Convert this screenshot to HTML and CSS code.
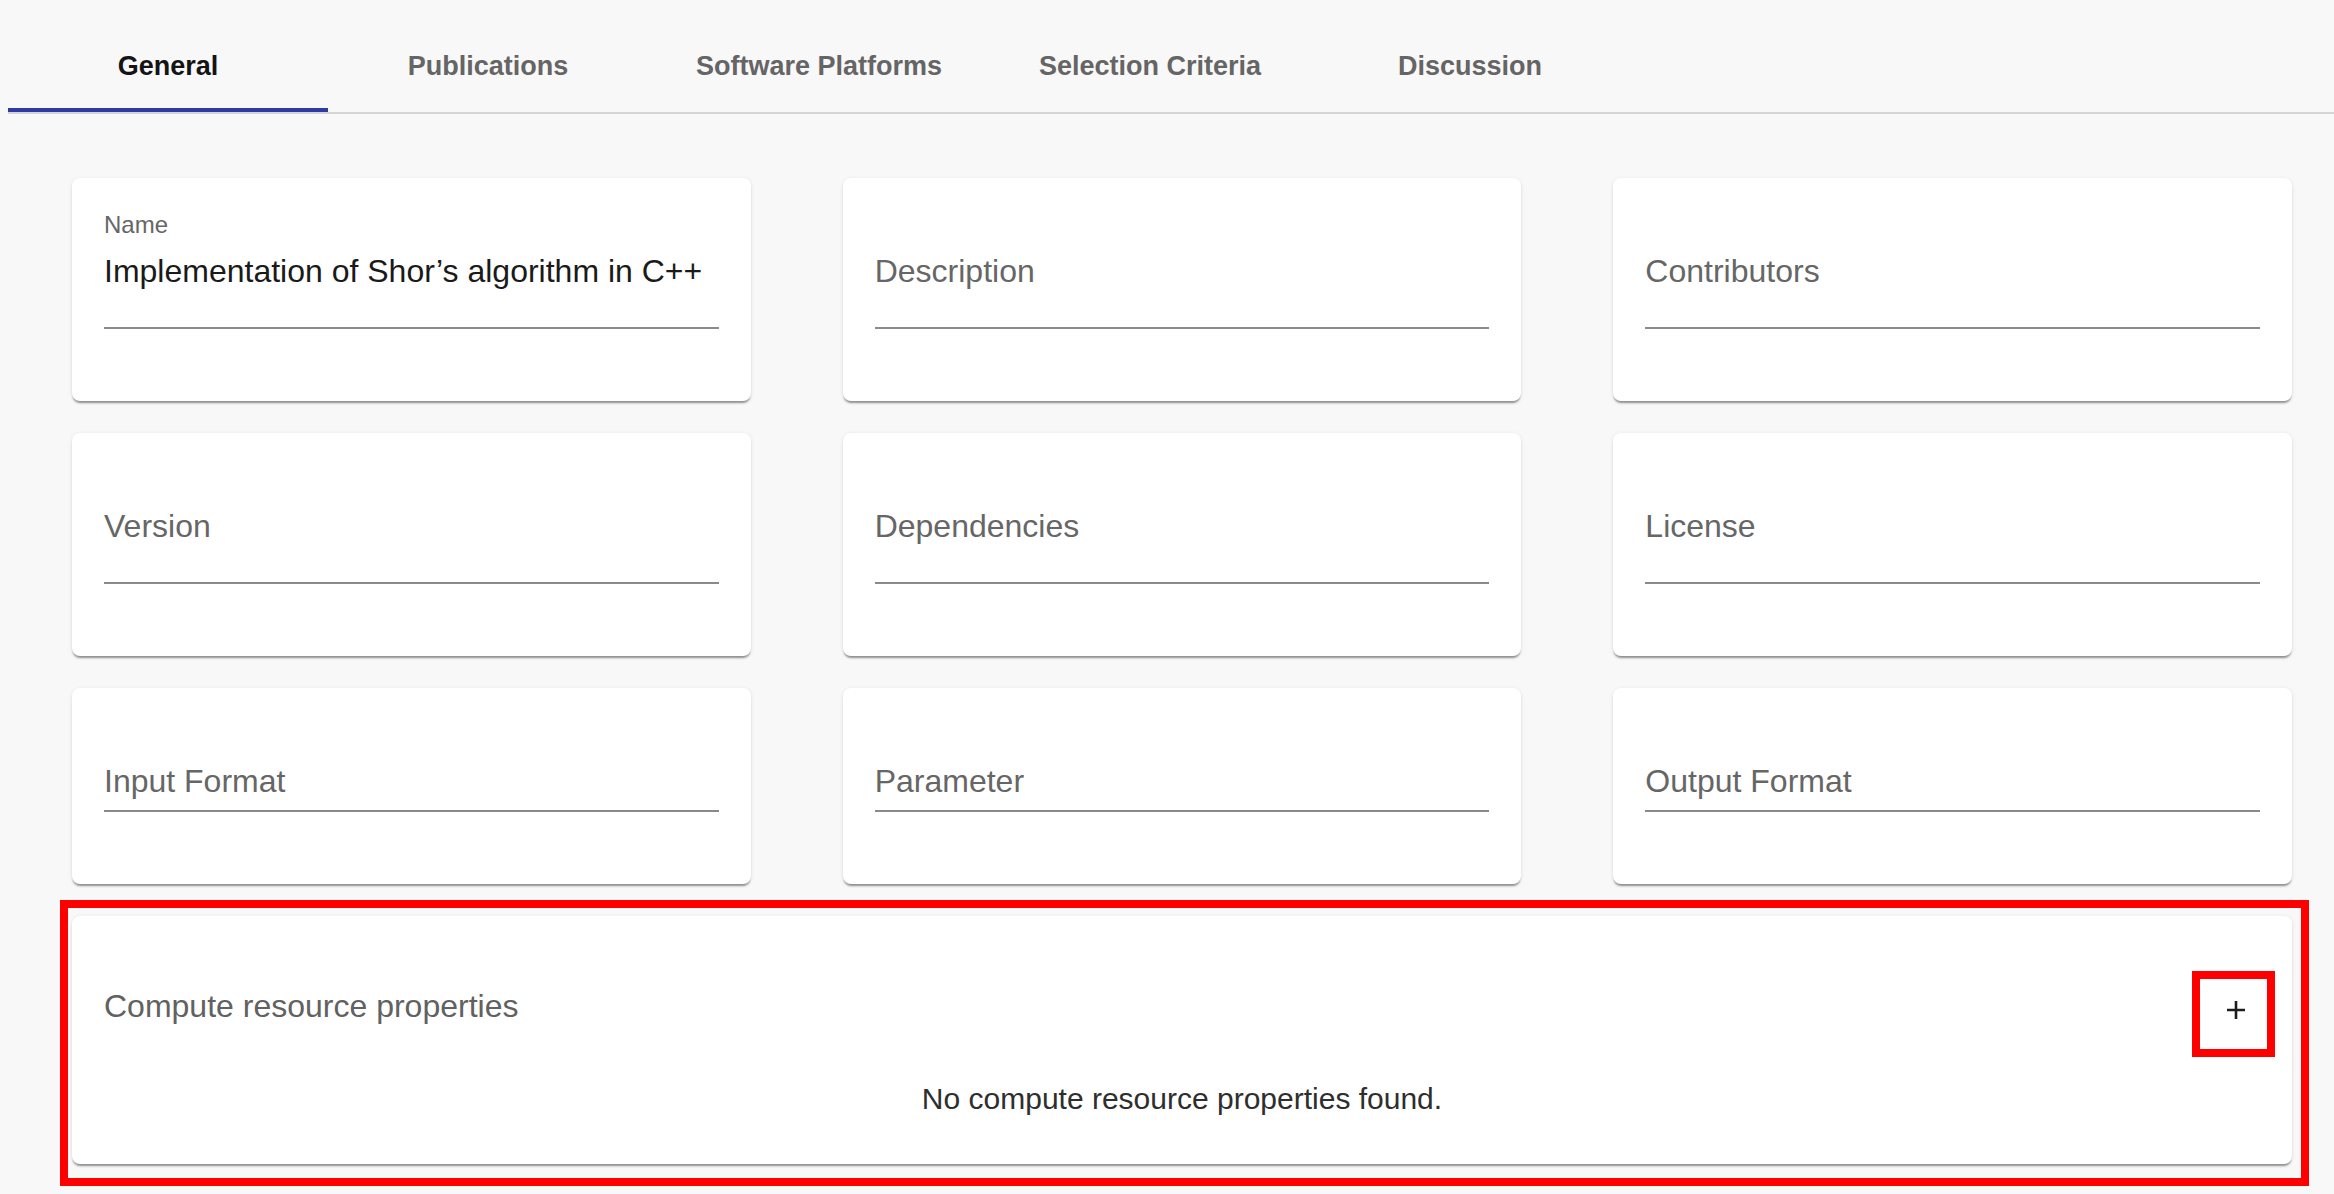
FILE: index.html
```html
<!DOCTYPE html>
<html lang="en">
<head>
<meta charset="utf-8">
<title>Implementation of Shor’s algorithm in C++</title>
<link rel="stylesheet" href="styles.css">
</head>
<body>
<nav class="tabs">
  <div class="tab active">General</div>
  <div class="tab">Publications</div>
  <div class="tab">Software Platforms</div>
  <div class="tab">Selection Criteria</div>
  <div class="tab">Discussion</div>
</nav>
<main class="content">
  <div class="grid">
    <div class="card field-card">
      <div class="label">Name</div>
      <div class="input multi">Implementation of Shor’s algorithm in C++</div>
    </div>
    <div class="card field-card">
      <div class="label"></div>
      <div class="input multi placeholder">Description</div>
    </div>
    <div class="card field-card">
      <div class="label"></div>
      <div class="input multi placeholder">Contributors</div>
    </div>
    <div class="card field-card">
      <div class="label"></div>
      <div class="input multi placeholder">Version</div>
    </div>
    <div class="card field-card">
      <div class="label"></div>
      <div class="input multi placeholder">Dependencies</div>
    </div>
    <div class="card field-card">
      <div class="label"></div>
      <div class="input multi placeholder">License</div>
    </div>
    <div class="card field-card">
      <div class="label"></div>
      <div class="input single placeholder">Input Format</div>
    </div>
    <div class="card field-card">
      <div class="label"></div>
      <div class="input single placeholder">Parameter</div>
    </div>
    <div class="card field-card">
      <div class="label"></div>
      <div class="input single placeholder">Output Format</div>
    </div>
  </div>
  <section class="resource-wrap">
    <div class="card resource-card">
      <div class="resource-head">
        <div class="resource-title">Compute resource properties</div>
        <button class="icon-btn" type="button" aria-label="Add">
          <svg width="20" height="20" viewBox="0 0 20 20"><path d="M10 1v18M1 10h18" stroke="#1c1c1c" stroke-width="2.6" fill="none"/></svg>
        </button>
      </div>
      <div class="empty">No compute resource properties found.</div>
      <div class="annot-inner"></div>
    </div>
  </section>
</main>
</body>
</html>
```

FILE: styles.css
```css
html, body {
  margin: 0;
  padding: 0;
}
body {
  background: #f8f8f8;
  font-family: "Liberation Sans", Arial, sans-serif;
}
.tabs {
  display: flex;
  margin: 16px 0 0 8px;
  border-bottom: 2px solid #d5d5d5;
}
.tab {
  position: relative;
  box-sizing: border-box;
  min-width: 320px;
  height: 96px;
  padding: 4px 48px 0;
  display: flex;
  align-items: center;
  justify-content: center;
  font-size: 27px;
  font-weight: bold;
  color: #656565;
  white-space: nowrap;
}
.tab.active {
  color: #141414;
}
.tab.active::after {
  content: "";
  position: absolute;
  left: 0;
  right: 0;
  bottom: 0;
  height: 4px;
  background: #2f3aa3;
}
.content {
  padding: 64px 42px 0 72px;
}
.grid {
  display: grid;
  grid-template-columns: repeat(3, 1fr);
  column-gap: 92px;
  row-gap: 32px;
}
.card {
  background: #fff;
  border-radius: 8px;
  box-shadow: 0 3px 2px -1px rgba(0, 0, 0, 0.38), 0 1px 4px rgba(0, 0, 0, 0.1);
}
.field-card {
  padding: 35px 32px 72px;
}
.label {
  height: 24px;
  line-height: 24px;
  font-size: 24px;
  color: #666;
  margin-bottom: 15px;
}
.input {
  font-size: 32px;
  line-height: 38px;
  color: #1a1a1a;
  border-bottom: 2px solid #8a8a8a;
  white-space: nowrap;
}
.input.multi {
  padding-bottom: 37px;
}
.input.single {
  padding-bottom: 10px;
}
.input.placeholder {
  color: #666;
}
.resource-wrap {
  margin: 16px -17px 0 -12px;
  padding: 8px 9px 14px 4px;
  border: 8px solid #ff0000;
}
.resource-card {
  position: relative;
  padding: 46px 32px 46px;
}
.resource-head {
  display: flex;
  align-items: center;
  justify-content: space-between;
  height: 96px;
  margin-bottom: 22px;
}
.resource-title {
  font-size: 32px;
  line-height: 38px;
  color: #616161;
  padding-bottom: 8px;
}
.icon-btn {
  width: 48px;
  height: 48px;
  padding: 0;
  margin: 0;
  border: 0;
  background: transparent;
  display: flex;
  align-items: center;
  justify-content: center;
}
.empty {
  text-align: center;
  font-size: 30px;
  line-height: 38px;
  color: #2e2e2e;
}
.annot-inner {
  position: absolute;
  box-sizing: border-box;
  border: 8px solid #ff0000;
  pointer-events: none;
  left: 2120px;
  top: 55px;
  width: 83px;
  height: 86px;
}
```
